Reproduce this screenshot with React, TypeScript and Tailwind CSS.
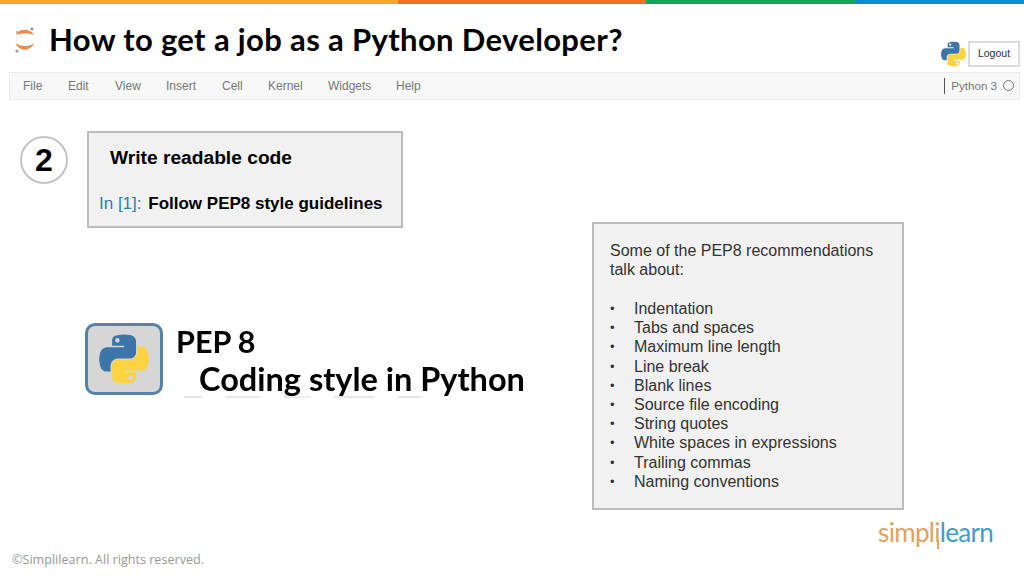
const sans = "font-['Liberation_Sans',Arial,sans-serif]";

const menuItems = [
  { label: "File", w: "w-[45px]" },
  { label: "Edit", w: "w-[47px]" },
  { label: "View", w: "w-[51px]" },
  { label: "Insert", w: "w-[56px]" },
  { label: "Cell", w: "w-[46px]" },
  { label: "Kernel", w: "w-[60px]" },
  { label: "Widgets", w: "w-[68px]" },
  { label: "Help", w: "w-[40px]" },
];

const pepItems = [
  "Indentation",
  "Tabs and spaces",
  "Maximum line length",
  "Line break",
  "Blank lines",
  "Source file encoding",
  "String quotes",
  "White spaces in expressions",
  "Trailing commas",
  "Naming conventions",
];

function PythonLogo({ className }: { className: string }) {
  const half =
    "M54.9 1C50.3 1 45.9 1.4 42.1 2.1C30.8 4.1 28.8 8.2 28.8 15.8V25.8H55.3V29.2H18.8C11.1 29.2 4.4 33.8 2.3 42.5C-0.1 52.5 -0.2 58.7 2.3 69.1C4.2 76.9 8.6 82.4 16.3 82.4H25.4V70.4C25.4 61.7 32.9 54 41.8 54H68.3C75.6 54 81.5 48 81.5 40.7V15.8C81.5 8.7 75.5 3.3 68.3 2.1C63.8 1.4 59.1 1 54.9 1ZM40.5 9A5 5 0 1 1 40.5 19A5 5 0 1 1 40.5 9Z";
  return (
    <svg viewBox="0 0 110 110" className={className}>
      <path d={half} fill="#3c76a8" fillRule="evenodd" />
      <path d={half} fill="#fdd343" fillRule="evenodd" transform="rotate(180 55 55)" />
    </svg>
  );
}

function JupyterMark() {
  return (
    <svg viewBox="0 0 24 28" className="w-[24px] h-[28px]">
      <path d="M2.5 10C6 3 17 3 21.5 10C17 8 7 8 2.5 10Z" fill="#ee8c4c" />
      <path d="M2.5 18C6 27 17 27 21.5 18C17 22 7 22 2.5 18Z" fill="#ee8c4c" />
      <circle cx="19" cy="4" r="1.4" fill="#8a8a8a" />
      <circle cx="4" cy="7" r="1" fill="#a5a5a5" />
      <circle cx="4" cy="26" r="1.6" fill="#9e9e9e" />
    </svg>
  );
}

export default function App() {
  return (
    <div className={`w-[1024px] h-[576px] overflow-hidden bg-white flex flex-col ${sans}`}>
      {/* top colour strip */}
      <div className="flex h-[4px] shrink-0">
        <div className="w-[398px] bg-[#faa527]" />
        <div className="w-[248px] bg-[#f37021]" />
        <div className="w-[210px] bg-[#12a65a]" />
        <div className="flex-1 bg-[#0a8fd5]" />
      </div>

      {/* title row */}
      <header className="h-[68px] shrink-0 flex pl-[13px] pr-[4px]">
        <div className="flex items-start flex-1 pt-[21px]">
          <JupyterMark />
          <h1 className="ml-[12px] text-[31px] leading-[29px] tracking-[0.35px] font-bold text-black whitespace-nowrap font-['Lato',sans-serif]">
            How to get a job as a Python Developer?
          </h1>
        </div>
        <div className="flex items-start gap-[2px] pt-[37px]">
          <PythonLogo className="w-[25px] h-[26px]" />
          <div className="w-[52px] h-[26px] flex items-center justify-center border-2 border-[#dcdcdc] bg-white text-[10.5px] text-[#333]">
            Logout
          </div>
        </div>
      </header>

      {/* notebook menu bar */}
      <nav className="h-[28px] shrink-0 ml-[9px] mr-[4px] flex items-center bg-[#f8f8f8] border border-[#ececec] text-[12px] text-[#777]">
        <div className="flex pl-[13px]">
          {menuItems.map((item) => (
            <span key={item.label} className={item.w}>
              {item.label}
            </span>
          ))}
        </div>
        <div className="ml-auto flex items-center pr-[5px]">
          <span className="w-px h-[16px] bg-[#555]" />
          <span className="ml-[6px] text-[11.6px]">Python 3</span>
          <span className="ml-[6px] w-[11px] h-[11px] rounded-full border-[1.5px] border-[#777]" />
        </div>
      </nav>

      {/* slide body */}
      <main className="flex-1 flex min-h-0">
        <section className="w-[592px] shrink-0 pt-[31px]">
          <div className="flex items-start pl-[20px]">
            <div className="mt-[5px] w-[48px] h-[48px] flex items-center justify-center rounded-full border-2 border-[#c4c4c4] text-[32px] font-bold text-black">
              2
            </div>
            <div className="ml-[19px] w-[316px] h-[97px] bg-[#f1f1f1] border-2 border-[#bcbcbc] pl-[21px] pt-[13px]">
              <p className="text-[19.2px] leading-[24px] font-bold text-black">Write readable code</p>
              <p className="mt-[22px] -ml-[11px] text-[17px] leading-[24px] whitespace-nowrap">
                <span className="text-[#2f7fb0]">In [1]:</span>{" "}
                <span className="ml-[2px] font-bold text-black">Follow PEP8 style guidelines</span>
              </p>
            </div>
          </div>

          <div className="mt-[95px] ml-[85px] flex">
            <div className="w-[78px] h-[72px] flex items-center justify-center rounded-[10px] border-[3px] border-[#5583a8] bg-[#d6d6d6]">
              <PythonLogo className="w-[50px] h-[50px] blur-[0.5px]" />
            </div>
            <div className="ml-[13px] font-['Lato',sans-serif] font-bold text-black blur-[0.5px] whitespace-nowrap">
              <p className="text-[30.5px] leading-[36px]">PEP 8</p>
              <p className="ml-[23px] text-[32.5px] leading-[36px] pt-[2px]">Coding style in Python</p>
              {/* cut-off line under the picture */}
              <div className="flex gap-[24px] ml-[8px] mt-[-1px] h-[2px]">
                <span className="w-[18px] bg-[#e4e4e4]" />
                <span className="w-[34px] bg-[#e8e8e8]" />
                <span className="w-[26px] bg-[#ebebeb]" />
                <span className="w-[40px] bg-[#e8e8e8]" />
                <span className="w-[24px] bg-[#e6e6e6]" />
              </div>
            </div>
          </div>
        </section>

        <section className="pt-[122px]">
          <div className="w-[312px] h-[288px] bg-[#f1f1f1] border-2 border-[#bcbcbc] pl-[16px] pt-[17px] text-[16px] leading-[19.2px] text-[#333]">
            <p>
              Some of the PEP8 recommendations
              <br />
              talk about:
            </p>
            <ul className="mt-[19.6px]">
              {pepItems.map((item) => (
                <li key={item} className="flex">
                  <span className="w-[24px] text-[13px]">•</span>
                  {item}
                </li>
              ))}
            </ul>
          </div>
        </section>
      </main>

      {/* footer */}
      <footer className="h-[66px] shrink-0 flex items-start justify-between pl-[12px] pr-[31px]">
        <p className="mt-[41px] text-[12.6px] text-[#999] font-['Open_Sans',sans-serif]">
          ©Simplilearn. All rights reserved.
        </p>
        <p className="mt-[6px] text-[26px] leading-[32px] font-normal tracking-[-0.7px] font-['Lato',sans-serif]">
          <span className="text-[#dfa35f]">simpl</span>
          <span className="relative text-[#dfa35f]">
            i
            <span className="absolute left-[3px] top-[24px] w-[2px] h-[9px] bg-[#e3a45c]" />
          </span>
          <span className="text-[#3f9cc9]">learn</span>
        </p>
      </footer>
    </div>
  );
}
